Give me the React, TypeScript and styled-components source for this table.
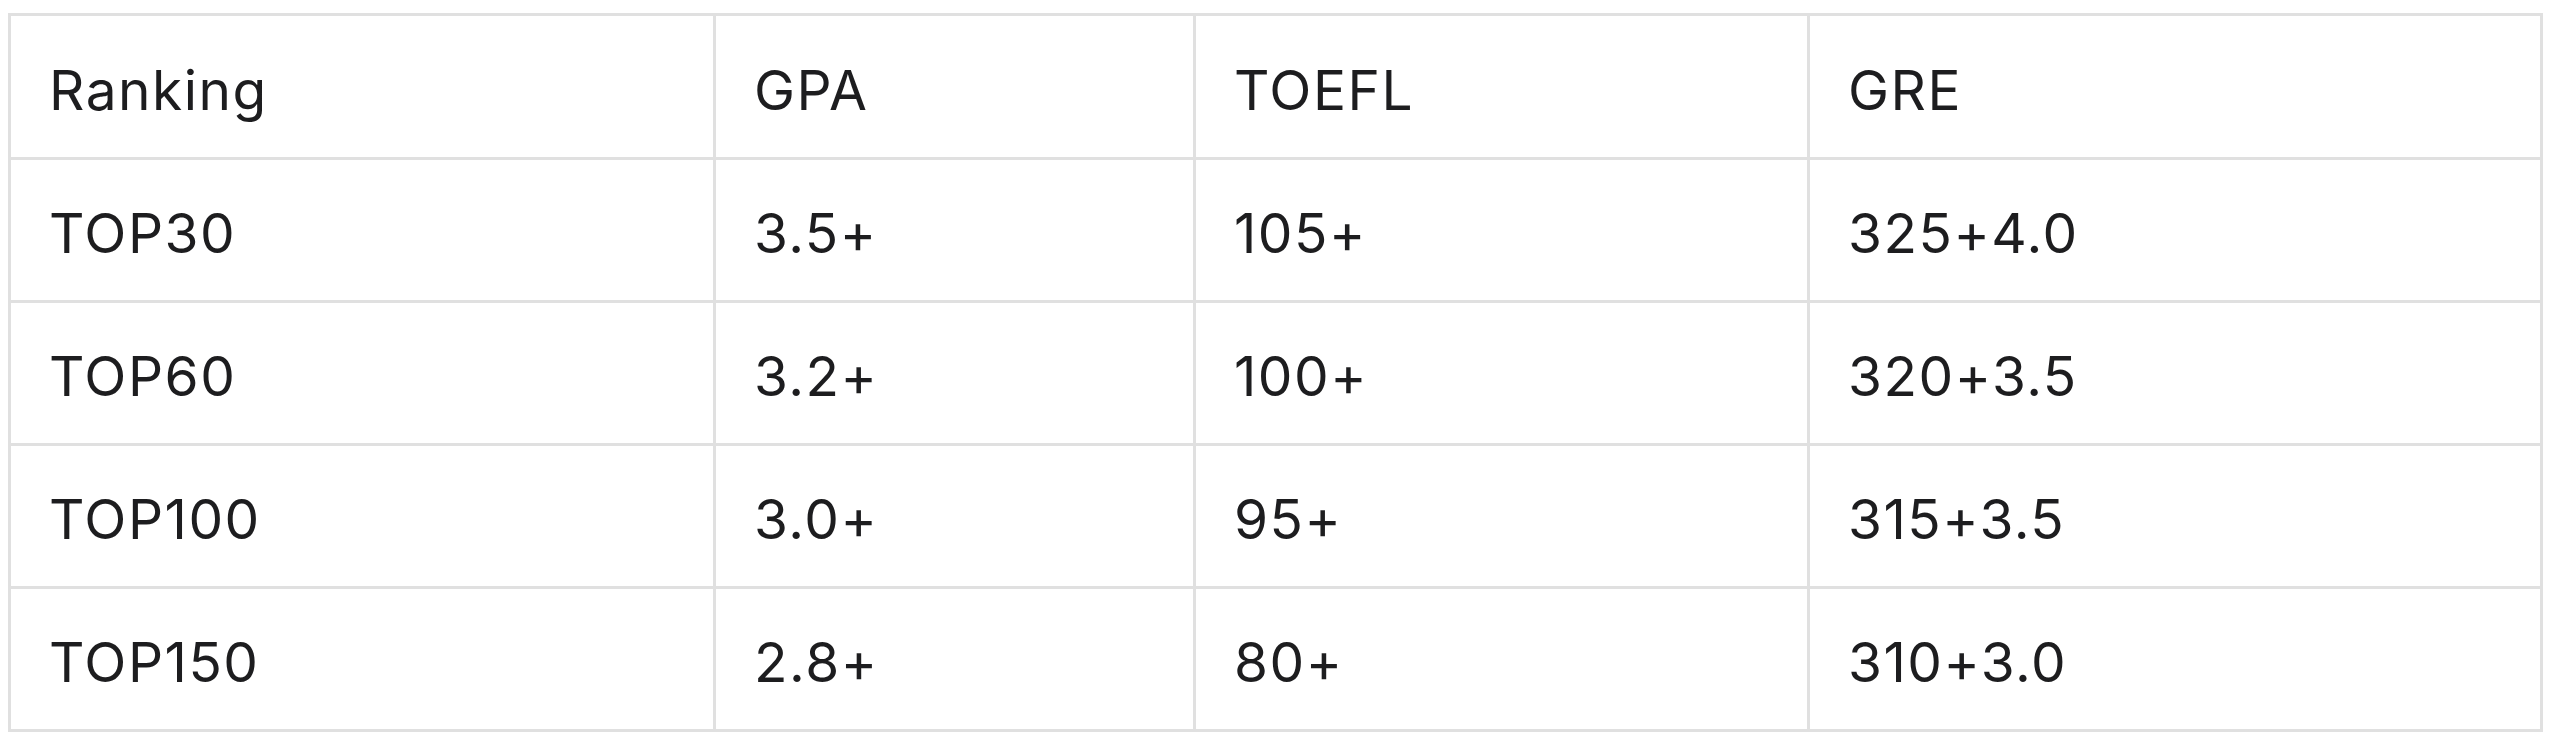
import React from "react";
import styled, { createGlobalStyle } from "styled-components";

const Global = createGlobalStyle`
  html, body { margin: 0; padding: 0; background: #ffffff; }
  body { padding: 13px 8px 0 8px; }
`;

const Table = styled.div`
  display: grid;
  width: 2535px;
  box-sizing: border-box;
  grid-template-columns: 702px 477px 611px 730px;
  grid-template-rows: 141px repeat(4, 140px);
  gap: 3px;
  padding: 3px;
  background: #e0e0e0;
  font-family: Inter, "Noto Sans", sans-serif;
`;

const Cell = styled.div`
  background: #ffffff;
  display: flex;
  align-items: center;
  box-sizing: border-box;
  padding: 6px 0 0 38px;
  font-size: 55px;
  letter-spacing: 1.5px;
  color: #1d1d1f;
  white-space: nowrap;
`;

const rows = [
  ["Ranking", "GPA", "TOEFL", "GRE"],
  ["TOP30", "3.5+", "105+", "325+4.0"],
  ["TOP60", "3.2+", "100+", "320+3.5"],
  ["TOP100", "3.0+", "95+", "315+3.5"],
  ["TOP150", "2.8+", "80+", "310+3.0"],
];

export default function App() {
  return (
    <>
      <Global />
      <Table>
        {rows.map((r, i) => r.map((c, j) => <Cell key={`${i}-${j}`}>{c}</Cell>))}
      </Table>
    </>
  );
}
